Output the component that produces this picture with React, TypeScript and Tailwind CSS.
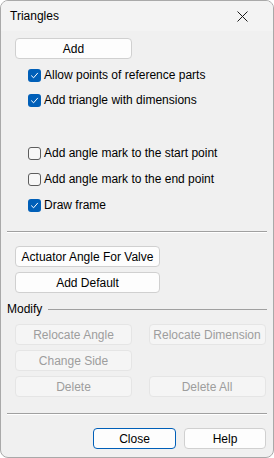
import React from 'react'

const Check = ({ checked, label }: { checked: boolean; label: string }) => (
  <div className="flex items-center gap-[3px] h-[26px] pl-[21px]">
    {checked ? (
      <span className="w-[13px] h-[13px] rounded-[3px] bg-[#005fb8] flex items-center justify-center">
        <svg width="9" height="9" viewBox="0 0 9 9" fill="none">
          <path d="M1.5 4.8 L3.6 6.8 L7.6 2.2" stroke="#ffffff" strokeWidth="1" strokeLinecap="round" strokeLinejoin="round" />
        </svg>
      </span>
    ) : (
      <span className="w-[13px] h-[13px] rounded-[3px] border border-[#5d5d5d] bg-[#f7f7f7]" />
    )}
    <span className="text-[12px] text-black leading-none">{label}</span>
  </div>
)

const Btn = ({ label, w, disabled, primary }: { label: string; w: string; disabled?: boolean; primary?: boolean }) => (
  <div
    className={`${w} h-[21px] rounded-[4px] border flex items-center justify-center text-[12px] leading-none ${
      disabled
        ? 'bg-[#f5f5f5] border-[#e5e5e5] text-[#9d9d9d]'
        : primary
        ? 'bg-[#fdfdfd] border-[#005fb8] text-black'
        : 'bg-[#fdfdfd] border-[#d0d0d0] text-black'
    }`}
  >
    {label}
  </div>
)

const App = () => {
  return (
    <div className="w-[274px] h-[458px] font-['Liberation_Sans',sans-serif]">
      <div className="w-full h-full rounded-[8px] border border-[#a9a9a9] bg-[#f0f0f0] overflow-hidden flex flex-col">
        <div className="h-[30px] bg-[#f3f3f3] flex items-center justify-between pl-[9px] pr-[25px]">
          <span className="text-[12px] text-black">Triangles</span>
          <svg width="11" height="11" viewBox="0 0 11 11">
            <path d="M0.5 0.5 L10.5 10.5 M10.5 0.5 L0.5 10.5" stroke="#1a1a1a" strokeWidth="1" />
          </svg>
        </div>

        <div className="flex flex-col px-[6px]">
          <div className="pl-[8px] pt-[7px]">
            <Btn label="Add" w="w-[117px]" />
          </div>
          <div className="mt-[3px]">
            <Check checked label="Allow points of reference parts" />
          </div>
          <div className="-mt-[1px]">
            <Check checked label="Add triangle with dimensions" />
          </div>
          <div className="mt-[27px]">
            <Check checked={false} label="Add angle mark to the start point" />
            <Check checked={false} label="Add angle mark to the end point" />
            <Check checked label="Draw frame" />
          </div>

          <div className="mt-[13px] border-t border-[#a0a0a0] border-b border-b-white" />

          <div className="pl-[8px] mt-[13px] flex flex-col gap-[5px]">
            <Btn label="Actuator Angle For Valve" w="w-[145px]" />
            <Btn label="Add Default" w="w-[145px]" />
          </div>

          <div className="mt-[8px] h-[16px] flex items-center gap-[6px]">
            <span className="text-[12px] text-black">Modify</span>
            <div className="flex-1 border-t border-[#a0a0a0]" />
          </div>

          <div className="pl-[8px] pr-[1px] mt-[7px] grid grid-cols-2 gap-x-[16px] gap-y-[5px]">
            <Btn label="Relocate Angle" w="w-[117px]" disabled />
            <Btn label="Relocate Dimension" w="w-[117px]" disabled />
            <Btn label="Change Side" w="w-[117px]" disabled />
            <div />
            <Btn label="Delete" w="w-[117px]" disabled />
            <Btn label="Delete All" w="w-[117px]" disabled />
          </div>

          <div className="mt-[16px] border-t border-[#a0a0a0] border-b border-b-white" />

          <div className="mt-[13px] flex justify-end gap-[8px] pr-[1px]">
            <Btn label="Close" w="w-[83px]" primary />
            <Btn label="Help" w="w-[82px]" />
          </div>
        </div>
      </div>
    </div>
  )
}

export default App
